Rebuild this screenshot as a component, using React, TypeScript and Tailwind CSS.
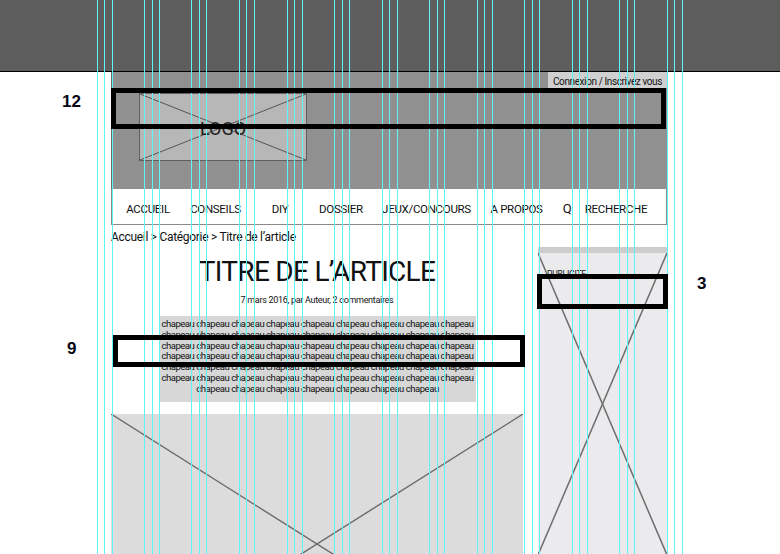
const guides = [
  97, 104, 112, 144, 152, 159, 191, 199, 206, 239, 246, 254, 287, 294, 302,
  334, 342, 349, 382, 389, 397, 429, 437, 444, 477, 484, 492, 524, 532, 539,
  572, 579, 587, 619, 627, 634, 667, 674, 682,
];

const navItems = [
  { label: "ACCUEIL", cls: "w-[72px]" },
  { label: "CONSEILS", cls: "w-[63px]" },
  { label: "DIY", cls: "w-[66px]" },
  { label: "DOSSIER", cls: "w-[56px]" },
  { label: "JEUX/CONCOURS", cls: "w-[115px]" },
  { label: "A PROPOS", cls: "w-[65px]" },
  { label: "Q", cls: "w-[36px] text-[13px]" },
  { label: "RECHERCHE", cls: "w-[62px]" },
];

const chapeauLines = [9, 9, 9, 9, 9, 9, 7];

function Cross({ stroke, width }: { stroke: string; width: number }) {
  return (
    <svg
      className="absolute inset-0 h-full w-full"
      viewBox="0 0 100 100"
      preserveAspectRatio="none"
    >
      <line x1="0" y1="0" x2="100" y2="100" stroke={stroke} strokeWidth={width} vectorEffect="non-scaling-stroke" />
      <line x1="100" y1="0" x2="0" y2="100" stroke={stroke} strokeWidth={width} vectorEffect="non-scaling-stroke" />
    </svg>
  );
}

export default function App() {
  return (
    <div className="relative h-[554px] w-full overflow-hidden bg-white font-['Liberation_Sans_Narrow','Roboto',sans-serif] text-[#111]">
      {/* top bar */}
      <div className="h-[72px] border-b border-black bg-[#5d5d5d]" />

      <div className="ml-[111px] w-[556px]">
        {/* header */}
        <header className="flex h-[117px] items-start border-l border-[#6a6a6a] bg-[#909090]">
          <div className="relative ml-[27px] mt-[21px] flex h-[68px] w-[168px] items-center justify-center border border-[#5f5f5f] bg-[#b7b7b7] pt-[3px]">
            <Cross stroke="#555" width={1} />
            <span className="relative text-[18px] leading-[19px] text-[#222]">LOGO</span>
          </div>
          <a className="ml-auto h-[16px] w-[119px] whitespace-nowrap bg-[#d0d0d0] pl-[5px] pt-[3px] text-[10px] leading-[13px] tracking-[-0.4px]">
            Connexion / Inscrivez vous
          </a>
        </header>

        {/* nav */}
        <nav className="flex h-[36px] items-start border-x border-b border-[#8a8a8a] pt-[13px] text-[11.5px] leading-[14px] tracking-[-0.3px]">
          {navItems.map((item) => (
            <a key={item.label} className={`flex justify-center whitespace-nowrap ${item.cls}`}>
              {item.label}
            </a>
          ))}
        </nav>

        <div className="flex gap-[15px]">
          <main className="w-[412px]">
            <p className="mt-[5px] whitespace-nowrap text-[12px] leading-[15px] tracking-[-0.3px]">
              Accueil &gt; Catégorie &gt; Titre de l’article
            </p>
            <h1 className="mt-[11px] text-center text-[28px] leading-[32px] tracking-[-0.7px]">
              TITRE DE L’ARTICLE
            </h1>
            <p className="mt-[6px] text-center text-[9px] leading-[12px] tracking-[-0.3px]">
              7 mars 2016, par Auteur, 2 commentaires
            </p>
            <div className="ml-[48px] mt-[10px] h-[86px] w-[317px] bg-[#d7d7d7] pt-[3px] text-center text-[9.5px] leading-[10.8px] tracking-[-0.45px]">
              {chapeauLines.map((n, i) => (
                <div key={i} className="whitespace-nowrap">
                  {Array(n).fill("chapeau").join(" ")}
                </div>
              ))}
            </div>
            <div className="relative mt-[12px] h-[260px] bg-[#dcdcdc]">
              <Cross stroke="#6a6a6a" width={1.4} />
            </div>
          </main>

          <aside className="mt-[22px] w-[129px]">
            <div className="h-[6px] bg-[#cdcdcd]" />
            <div className="relative h-[302px] bg-[#ebebed] pl-[9px] pt-[7px]">
              <Cross stroke="#6e6e6e" width={1.5} />
              <span className="relative text-[8.5px] leading-[11px] tracking-[-0.2px]">PUBLICITE</span>
            </div>
          </aside>
        </div>
      </div>

      {/* guides overlay */}
      <div className="pointer-events-none absolute inset-0">
        {guides.map((x) => (
          <div key={x} className="absolute top-0 h-full w-px bg-[#5cf6f6]" style={{ left: x }} />
        ))}
      </div>

      {/* annotations */}
      <div className="pointer-events-none absolute left-[111px] top-[88px] h-[41px] w-[555px] border-[5px] border-black" />
      <div className="pointer-events-none absolute left-[113px] top-[335px] h-[32px] w-[412px] border-[5px] border-black" />
      <div className="pointer-events-none absolute left-[537px] top-[274px] h-[35px] w-[131px] border-[5px] border-black" />
      <span className="absolute left-[62px] top-[93px] font-['Liberation_Sans',Arial,sans-serif] text-[17px] font-bold leading-[17px] text-[#050514]">12</span>
      <span className="absolute left-[67px] top-[340px] font-['Liberation_Sans',Arial,sans-serif] text-[17px] font-bold leading-[17px] text-[#050514]">9</span>
      <span className="absolute left-[697px] top-[275px] font-['Liberation_Sans',Arial,sans-serif] text-[17px] font-bold leading-[17px] text-[#050514]">3</span>
    </div>
  );
}
